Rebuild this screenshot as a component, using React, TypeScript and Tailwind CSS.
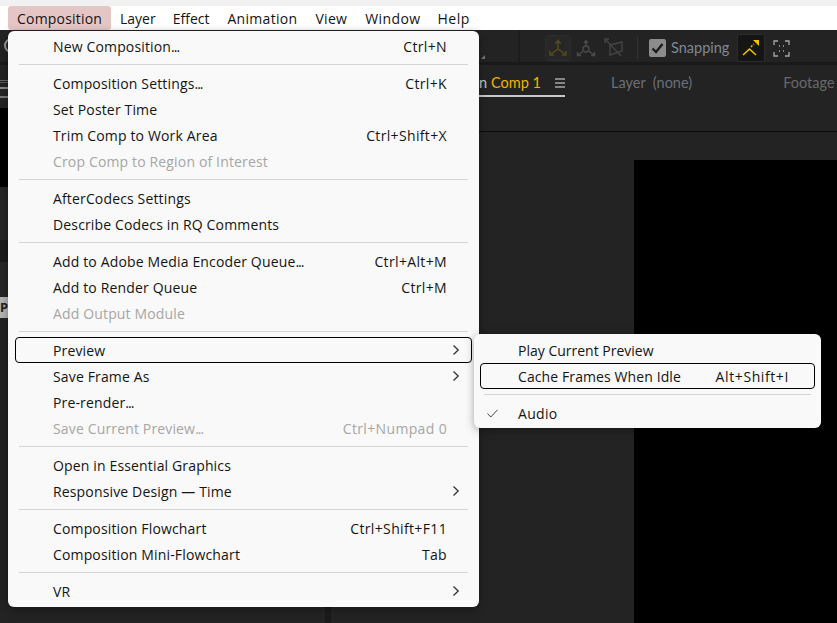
import React from "react";

type Item =
  | { sep: true }
  | { label: string; shortcut?: string; disabled?: boolean; sub?: boolean; focus?: boolean };

const items: Item[] = [
  { label: "New Composition...", shortcut: "Ctrl+N" },
  { sep: true },
  { label: "Composition Settings...", shortcut: "Ctrl+K" },
  { label: "Set Poster Time" },
  { label: "Trim Comp to Work Area", shortcut: "Ctrl+Shift+X" },
  { label: "Crop Comp to Region of Interest", disabled: true },
  { sep: true },
  { label: "AfterCodecs Settings" },
  { label: "Describe Codecs in RQ Comments" },
  { sep: true },
  { label: "Add to Adobe Media Encoder Queue...", shortcut: "Ctrl+Alt+M" },
  { label: "Add to Render Queue", shortcut: "Ctrl+M" },
  { label: "Add Output Module", disabled: true },
  { sep: true },
  { label: "Preview", sub: true, focus: true },
  { label: "Save Frame As", sub: true },
  { label: "Pre-render..." },
  { label: "Save Current Preview...", shortcut: "Ctrl+Numpad 0", disabled: true },
  { sep: true },
  { label: "Open in Essential Graphics" },
  { label: "Responsive Design — Time", sub: true },
  { sep: true },
  { label: "Composition Flowchart", shortcut: "Ctrl+Shift+F11" },
  { label: "Composition Mini-Flowchart", shortcut: "Tab" },
  { sep: true },
  { label: "VR", sub: true },
];

function Chevron({ focus }: { focus?: boolean }) {
  return (
    <svg
      width="8"
      height="12"
      viewBox="0 0 8 12"
      className={`absolute inset-y-0 my-auto ${focus ? "right-[11px]" : "right-[12px]"}`}
      fill="none"
    >
      <path d="M1.5 1.5 L6.2 6 L1.5 10.5" stroke="#333333" strokeWidth="1.3" />
    </svg>
  );
}

function Label({ text }: { text: string }) {
  if (text.endsWith("...")) {
    return (
      <>
        {text.slice(0, -3)}
        <span className="tracking-[-1px]">...</span>
      </>
    );
  }
  return <>{text}</>;
}

function Row({ item }: { item: Extract<Item, { label: string }> }) {
  return (
    <div
      className={`relative flex h-[26px] items-center rounded-[4px] pl-[38px] pr-[25px] ${
        item.focus ? "border border-black" : ""
      } ${item.disabled ? "text-[#a6a6a6]" : "text-[#141414]"}`}
    >
      <span className={`tracking-[0.15px] ${item.focus ? "ml-[-1px]" : ""}`}>
        <Label text={item.label} />
      </span>
      {item.shortcut && <span className="ml-auto tracking-[0.35px]">{item.shortcut}</span>}
      {item.sub && <Chevron focus={item.focus} />}
    </div>
  );
}

function Toolbar() {
  return (
    <div className="relative flex h-[32px] shrink-0 items-center bg-[#232323] pl-[545px] pt-[4px]">
      <div className="absolute left-[4px] top-[8px] h-[15px] w-[15px] rounded-full border-2 border-[#9a9a9a]" />
      <div className="absolute bottom-[3px] left-[481px] h-0 w-0 border-b-[4px] border-l-[4px] border-b-[#777777] border-l-transparent" />
      <div className="absolute inset-y-0 left-[518px] w-[2px] bg-[#1c1c1c]" />
      <div className="flex h-[26px] w-[26px] items-center justify-center rounded-[3px] border border-[#2d2d2d] bg-[#272727]">
        <svg width="20" height="20" viewBox="0 0 20 20" fill="none" stroke="#5a4a1a" strokeWidth="1.5">
          <path d="M10 3v8M10 11l-7 5M10 11l7 5" />
          <path d="M7.5 5.5L10 2.5l2.5 3M2 13v4h4M18 13v4h-4" />
        </svg>
      </div>
      <svg className="ml-[4px]" width="22" height="20" viewBox="0 0 22 20" fill="none" stroke="#4a4a4a" strokeWidth="1.4">
        <circle cx="11" cy="11" r="3" />
        <path d="M11 3v5M8.5 13L3 17M13.5 13L19 17M9 5l2-2.5L13 5M2.5 14v3.5H6M19.5 14v3.5H16" />
      </svg>
      <svg className="ml-[7px]" width="20" height="20" viewBox="0 0 20 20" fill="none" stroke="#444444" strokeWidth="1.4">
        <path d="M6 7l12-3v9L6 17zM1 1l16 17M1 5V1h4" />
      </svg>
      <div className="ml-[13px] h-[22px] w-px bg-[#333333]" />
      <div className="ml-[11px] flex h-[18px] w-[17px] items-center justify-center rounded-[2px] bg-[#8c8c8c]">
        <svg width="13" height="12" viewBox="0 0 13 12" fill="none" stroke="#1c1c1c" strokeWidth="2.4">
          <path d="M1.5 6.5L5 10 11.5 2" />
        </svg>
      </div>
      <span className="ml-[5px] w-[66px] font-['Lato'] text-[14.5px] text-[#808894]">Snapping</span>
      <div className="flex h-[28px] w-[28px] items-center justify-center rounded-[3px] border border-[#2c2c2c] bg-[#151515]">
        <svg width="20" height="20" viewBox="0 0 20 20" fill="none" stroke="#f2c500" strokeWidth="1.5">
          <path d="M2 17l6.5-6 6.5 6" />
          <path d="M10 9l3-3" strokeDasharray="2 1.5" />
          <path d="M12 2h6v6z" fill="#f2c500" stroke="none" />
        </svg>
      </div>
      <svg className="ml-[8px]" width="17" height="17" viewBox="0 0 17 17" fill="none" stroke="#a8a8a8" strokeWidth="1.3">
        <path d="M1 5V1h4M12 1h4v4M16 12v4h-4M5 16H1v-4" />
        <path d="M6 6h1M10 6h1M6 11h1M10 11h1" />
      </svg>
    </div>
  );
}

function Tabs() {
  return (
    <div className="flex h-[67px] shrink-0 items-start whitespace-nowrap border-b border-b-[#0c0c0c] bg-[#232323] pl-[135px] font-['Lato'] text-[14.5px]">
      <div className="flex h-[32px] w-[99px] items-center justify-end border-b-2 border-b-[#c8c8c8] pt-[5px]">
        <span className="text-[#c4c4c4]">on</span>
        <span className="ml-[4px] text-[#f0b400]">Comp 1</span>
        <svg className="ml-[14px]" width="10" height="10" viewBox="0 0 10 10" stroke="#a6a6a6" strokeWidth="1.4">
          <path d="M0 1h10M0 5h10M0 9h10" />
        </svg>
      </div>
      <span className="ml-[46px] mt-[7px] text-[#69707a]">Layer&nbsp;&nbsp;(none)</span>
      <span className="ml-[91px] mt-[7px] text-[#696969]">Footage</span>
    </div>
  );
}

function LeftColumn() {
  return (
    <div className="flex w-[325px] shrink-0 flex-col bg-[#232323]">
      <div className="flex h-[43px] flex-col bg-[#232323] pt-[15px]">
        <div className="h-px bg-[#666666]" />
        <div className="mt-[1px] h-px bg-[#555555]" />
        <div className="mt-[4px] h-[2px] bg-[#888888]" />
        <div className="mt-[7px] h-[2px] bg-[#777777]" />
      </div>
      <div className="h-[79px] bg-black" />
      <div className="h-[53px] bg-[#262626]" />
      <div className="h-[22px] bg-[#1a1a1a]" />
      <div className="h-[35px] bg-[#262626]" />
      <div className="flex h-[21px] items-center bg-[#b4b4b4] font-['Noto_Sans'] text-[13px] font-bold leading-none text-[#222222]">P</div>
      <div className="flex-1 bg-[#232323]" />
    </div>
  );
}

export default function App() {
  return (
    <div className="relative flex h-[623px] w-[837px] flex-col overflow-hidden bg-[#232323] font-['Open_Sans','Noto_Sans',sans-serif] text-[14px]">
      <div className="h-[6px] shrink-0 bg-[#f1f1f1]" />
      <nav className="flex h-[24px] shrink-0 items-center whitespace-nowrap bg-white tracking-[0.2px] text-[#141414]">
        <span className="ml-[8px] flex h-[24px] w-[103px] items-center rounded-[3px] bg-[#e5c6c6] pl-[9px]">Composition</span>
        <span className="ml-[9px] tracking-[0px]">Layer</span>
        <span className="ml-[17px] tracking-[0px]">Effect</span>
        <span className="ml-[18px] tracking-[0.3px]">Animation</span>
        <span className="ml-[18px] tracking-[0.3px]">View</span>
        <span className="ml-[18px] tracking-[0.4px]">Window</span>
        <span className="ml-[17px] tracking-[0.5px]">Help</span>
      </nav>
      <Toolbar />
      <div className="h-[3px] shrink-0 bg-[#1a1a1a]" />
      <div className="flex flex-1">
        <LeftColumn />
        <div className="w-[6px] shrink-0 bg-[#1a1a1a]" />
        <div className="flex flex-1 flex-col">
          <Tabs />
          <div className="flex flex-1 bg-[#232323] pl-[303px] pt-[28px]">
            <div className="flex-1 bg-black" />
          </div>
        </div>
      </div>

      <div className="absolute left-[8px] top-[31px] flex w-[471px] flex-col rounded-[6px] bg-[#f9f9f9] px-[7px] pb-[3px] pt-[2px] shadow-[0_2px_8px_rgba(0,0,0,0.35)]">
        {items.map((item, i) =>
          "sep" in item ? (
            <div key={i} className="flex h-[11px] shrink-0 items-center px-[4px]">
              <div className="h-px w-full bg-[#d4d4d4]" />
            </div>
          ) : (
            <Row key={i} item={item} />
          )
        )}
      </div>

      <div className="absolute left-[474px] top-[334px] flex w-[347px] flex-col rounded-[6px] bg-[#f9f9f9] px-[6px] pb-[2px] pt-[3px] text-[#141414] shadow-[0_2px_8px_rgba(0,0,0,0.35)]">
        <div className="flex h-[26px] items-center pl-[38px]">Play Current Preview</div>
        <div className="flex h-[26px] items-center rounded-[4px] border border-black pl-[37px] pr-[25px]">
          <span className="tracking-[0.1px]">Cache Frames When Idle</span>
          <span className="ml-auto tracking-[0.6px]">Alt+Shift+I</span>
        </div>
        <div className="flex h-[11px] items-center px-[4px]">
          <div className="h-px w-full bg-[#d4d4d4]" />
        </div>
        <div className="relative flex h-[26px] items-center pl-[38px] tracking-[0.3px]">
          <svg className="absolute left-[7px] top-[9px]" width="11" height="9" viewBox="0 0 11 9" fill="none" stroke="#444444" strokeWidth="1">
            <path d="M0.5 4.5L3.8 8 10.5 0.8" />
          </svg>
          Audio
        </div>
      </div>
    </div>
  );
}
